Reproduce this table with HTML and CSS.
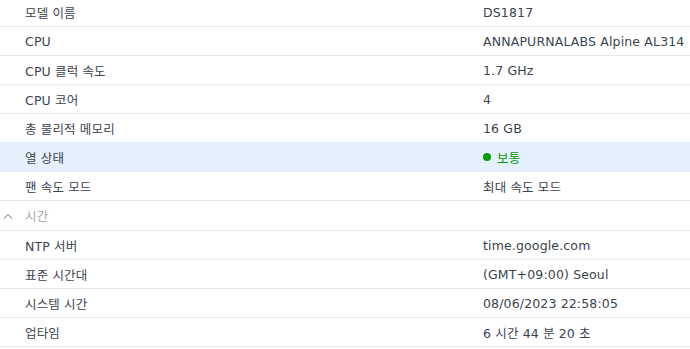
FILE: index.html
```html
<!DOCTYPE html>
<html lang="ko">
<head>
<meta charset="utf-8">
<link rel="stylesheet" href="styles.css">
</head>
<body>
<div class="table">
  <div class="row"><div class="label">모델 이름</div><div class="value">DS1817</div></div>
  <div class="row"><div class="label">CPU</div><div class="value">ANNAPURNALABS Alpine AL314</div></div>
  <div class="row"><div class="label">CPU 클럭 속도</div><div class="value">1.7 GHz</div></div>
  <div class="row"><div class="label">CPU 코어</div><div class="value">4</div></div>
  <div class="row"><div class="label">총 물리적 메모리</div><div class="value">16 GB</div></div>
  <div class="row selected"><div class="label">열 상태</div><div class="value status"><span class="dot"></span>보통</div></div>
  <div class="row"><div class="label">팬 속도 모드</div><div class="value">최대 속도 모드</div></div>
  <div class="row section">
    <div class="label">
      <svg class="chev" width="10" height="6" viewBox="0 0 10 6"><path d="M1 5.5 L5 1.5 L9 5.5" fill="none" stroke="#a3a9b0" stroke-width="1.2"/></svg>
      시간
    </div>
  </div>
  <div class="row"><div class="label">NTP 서버</div><div class="value">time.google.com</div></div>
  <div class="row"><div class="label">표준 시간대</div><div class="value">(GMT+09:00) Seoul</div></div>
  <div class="row"><div class="label">시스템 시간</div><div class="value">08/06/2023 22:58:05</div></div>
  <div class="row"><div class="label">업타임</div><div class="value">6 시간 44 분 20 초</div></div>
</div>
</body>
</html>
```
FILE: styles.css
```css
html, body {
  margin: 0;
  padding: 0;
  background: #fff;
}
body {
  font-family: "DejaVu Sans", "Noto Sans CJK KR", sans-serif;
  font-size: 12.5px;
  letter-spacing: 0.15px;
  color: #3a4450;
  overflow: hidden;
}
.table {
  margin-top: -2px;
}
.row {
  display: flex;
  align-items: center;
  height: 28px;
  border-bottom: 1px solid #e6eaf0;
}
.row.selected {
  background: #e4f0fc;
}
.row.section {
  height: 29px;
}
.label {
  width: 458px;
  padding-left: 25px;
  display: flex;
  align-items: center;
}
.value {
  display: flex;
  align-items: center;
}
.status {
  color: #0a9a0a;
}
.dot {
  width: 8px;
  height: 8px;
  border-radius: 50%;
  background: #0a9a0a;
  margin-right: 6px;
}
.section .label {
  color: #a0a6ad;
  padding-left: 3px;
}
.chev {
  margin-right: 12px;
}
```
